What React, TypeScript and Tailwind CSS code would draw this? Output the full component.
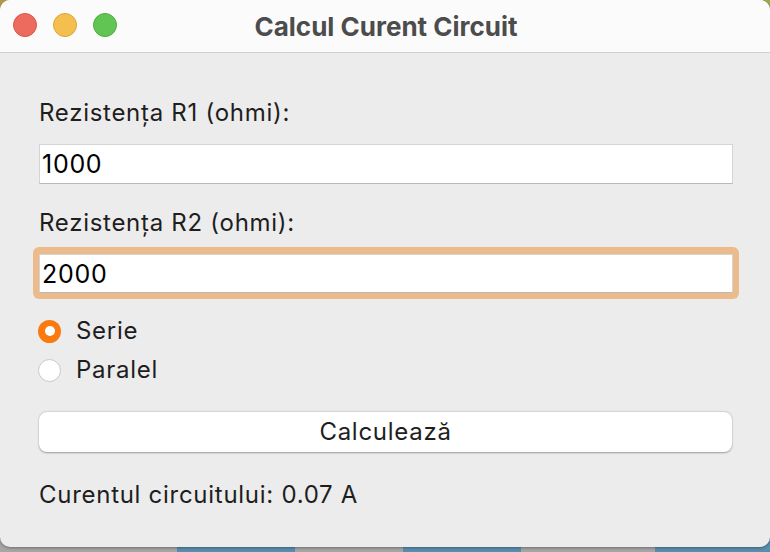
import React, { useState } from 'react';

// Tk-style "Calcul Curent Circuit" window on a macOS desktop
const font = { fontFamily: 'Inter, "Liberation Sans", sans-serif' };

const App: React.FC = () => {
  const [r1, setR1] = useState('1000');
  const [r2, setR2] = useState('2000');
  const [mode, setMode] = useState<'serie' | 'paralel'>('serie');
  const [result, setResult] = useState('0.07');

  const calc = () => {
    const a = parseFloat(r1);
    const b = parseFloat(r2);
    if (!a || !b) return;
    const r = mode === 'serie' ? a + b : (a * b) / (a + b);
    setResult((220 / r).toFixed(2));
  };

  return (
    <div className="relative w-[770px] h-[552px] bg-[#a6a6a6] overflow-hidden" style={font}>
      {/* desktop behind the window */}
      <div className="absolute left-0 top-0 w-[14px] h-[14px] bg-[#b09a4a]" />
      <div className="absolute right-0 top-0 w-[14px] h-[14px] bg-[#9fa84a]" />
      <div className="absolute left-0 bottom-0 w-full h-[14px] flex">
        <div className="w-[177px] bg-[#a6a6a6]" />
        <div className="w-[118px] bg-[#5a8eae]" />
        <div className="w-[108px] bg-[#a6a6a6]" />
        <div className="w-[118px] bg-[#5a8eae]" />
        <div className="w-[134px] bg-[#a6a6a6]" />
        <div className="flex-1 bg-[#5a8eae]" />
      </div>

      {/* window */}
      <div className="relative h-[547px] rounded-[10px] overflow-hidden bg-[#ececec] shadow-[0_1px_3px_rgba(0,0,0,0.35)] flex flex-col">
        <div className="relative h-[53px] bg-[#fbfbfb] border-b border-[#cfcfcf] flex items-center justify-center shrink-0">
          <div className="absolute left-[13px] top-[13px] flex gap-[16px]">
            <span className="w-[24px] h-[24px] rounded-full bg-[#ec6a5e] border border-[#d8564b]" />
            <span className="w-[24px] h-[24px] rounded-full bg-[#f5bf4f] border border-[#dca43a]" />
            <span className="w-[24px] h-[24px] rounded-full bg-[#61c554] border border-[#4eab42]" />
          </div>
          <span className="text-[26px] font-bold text-[#4c4c4c] ml-[2px]">Calcul Curent Circuit</span>
        </div>

        <div className="flex flex-col px-[39px] pt-[45px] text-[#1e1e1e] text-[24px] tracking-[0.03em]">
          <label className="leading-[30px]">Rezistența R1 (ohmi):</label>
          <div className="mt-[16px] mr-[-2px]">
            <input
              value={r1}
              onChange={(e) => setR1(e.target.value)}
              className="w-full h-[40px] bg-white border border-[#d4d4d4] border-b-[#b8b8b8] px-[2px] text-[25px] text-black outline-none"
            />
          </div>

          <label className="leading-[30px] mt-[24px]">Rezistența R2 (ohmi):</label>
          <div className="mt-[9px] ml-[-6px] mr-[-8px] px-[6px] pt-[7px] pb-[6px] rounded-[6px] bg-[#ecbb8c]">
            <input
              autoFocus
              value={r2}
              onChange={(e) => setR2(e.target.value)}
              className="w-full h-[39px] bg-white border border-[#d4d4d4] border-b-[#b8b8b8] px-[2px] text-[25px] text-black outline-none caret-black"
            />
          </div>

          <div className="flex flex-col gap-[15px] mt-[20px] ml-[-1px]">
            <button type="button" onClick={() => setMode('serie')} className="flex items-center gap-[15px] text-left">
              {mode === 'serie' ? (
                <span className="w-[23px] h-[23px] rounded-full bg-[#fa7a10] flex items-center justify-center">
                  <span className="w-[10px] h-[10px] rounded-full bg-white" />
                </span>
              ) : (
                <span className="w-[23px] h-[23px] rounded-full bg-white border border-[#c8c8c8]" />
              )}
              <span className="leading-[24px]">Serie</span>
            </button>
            <button type="button" onClick={() => setMode('paralel')} className="flex items-center gap-[15px] text-left">
              {mode === 'paralel' ? (
                <span className="w-[23px] h-[23px] rounded-full bg-[#fa7a10] flex items-center justify-center">
                  <span className="w-[10px] h-[10px] rounded-full bg-white" />
                </span>
              ) : (
                <span className="w-[23px] h-[23px] rounded-full bg-white border border-[#c8c8c8]" />
              )}
              <span className="leading-[24px]">Paralel</span>
            </button>
          </div>

          <button
            type="button"
            onClick={calc}
            className="mt-[30px] mr-[-1px] h-[40px] rounded-[8px] bg-white shadow-[0_0.5px_2px_rgba(0,0,0,0.35)] text-[#1e1e1e]"
          >
            Calculează
          </button>

          <p className="mt-[28px] leading-[30px]">Curentul circuitului: {result} A</p>
        </div>
      </div>
    </div>
  );
};

export default App;
